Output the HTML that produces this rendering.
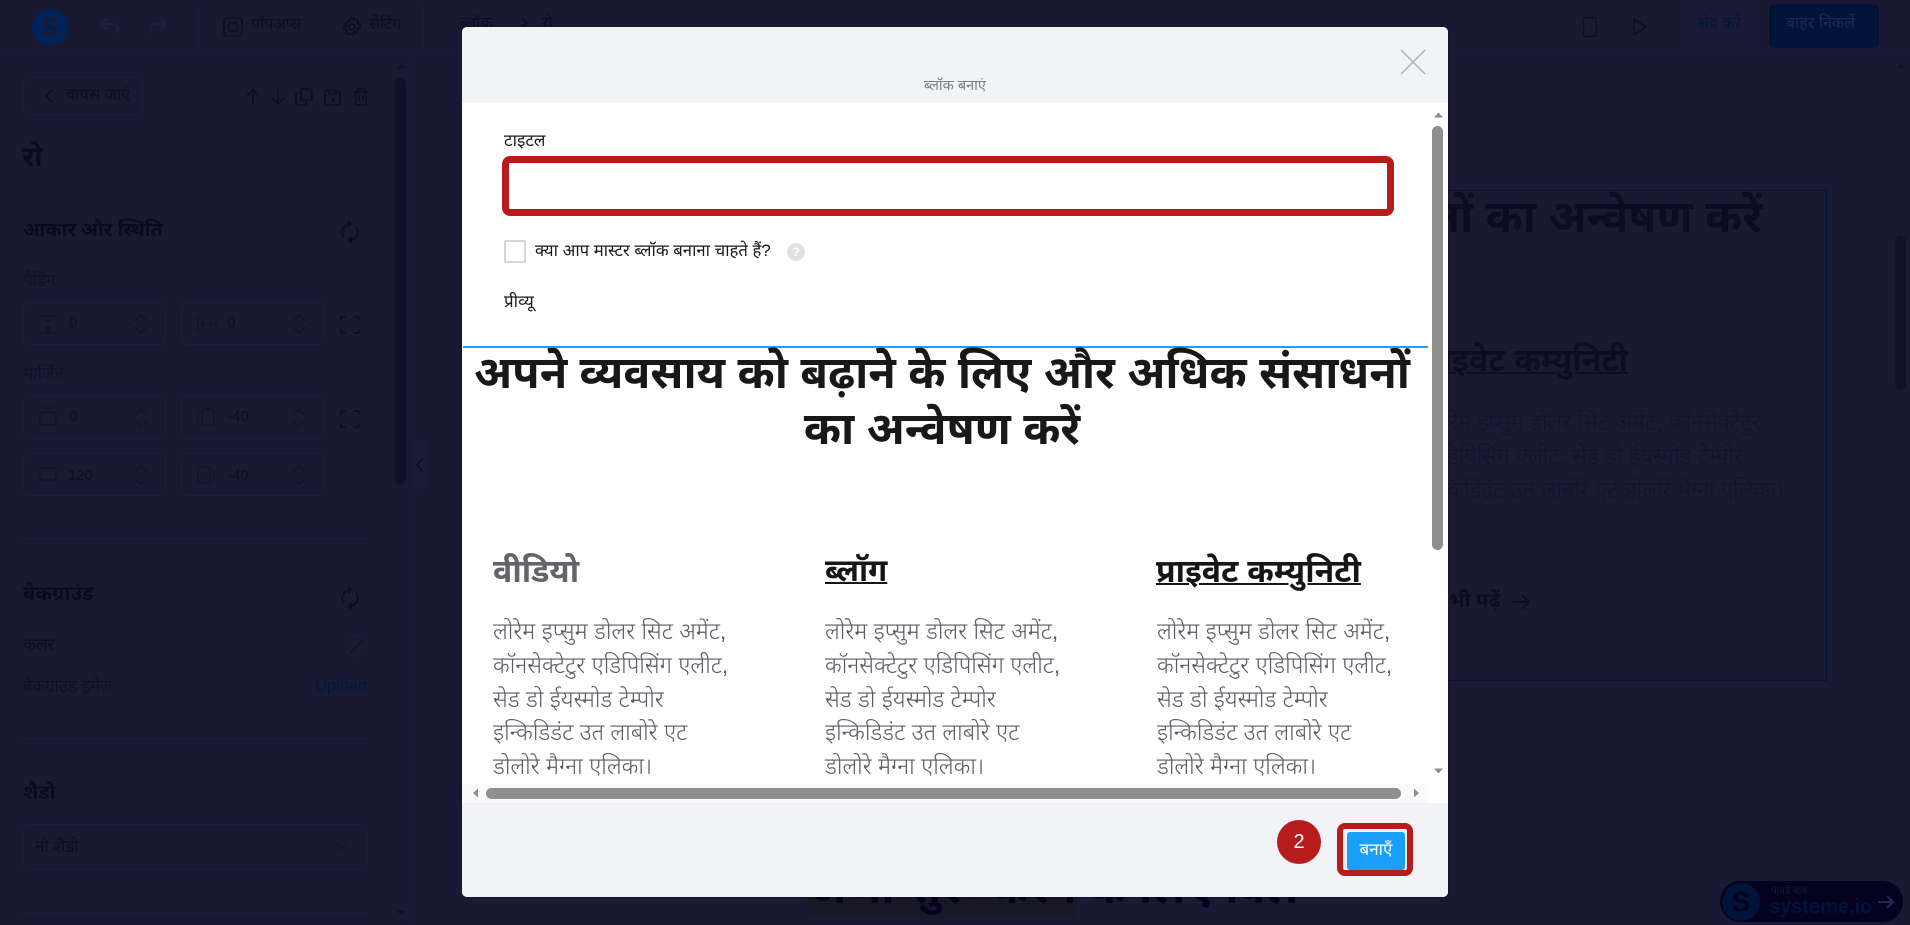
<!DOCTYPE html>
<html lang="hi"><head><meta charset="utf-8"><title>ब्लॉक बनाएं</title>
<style>
html,body{margin:0;padding:0;width:1910px;height:925px;overflow:hidden;background:#1a1934}
body{position:relative;font-family:"Liberation Sans","Noto Sans Devanagari","Lohit Devanagari","Noto Sans CJK JP",sans-serif;color:#0d0c24}
.a{position:absolute;white-space:nowrap}
.t{line-height:30px;height:30px}
svg{position:absolute;overflow:visible;fill:none}
.box{position:absolute;border:1px solid #1f1e3a;border-radius:6px;box-sizing:border-box}
.line{position:absolute;background:#1e1d39;height:1px}
.b{font-weight:700}
.p{font-size:23px;font-weight:300;line-height:33.8px;color:#5a5b63;left:0}
.h3{font-size:32px;font-weight:700;line-height:40px;color:#151618;text-decoration:underline;text-decoration-thickness:2px}
</style></head><body>
<!-- top bar -->
<div class="line" style="left:0;top:52px;width:1910px"></div>
<div class="a" style="left:32px;top:9px;width:36px;height:36px;border-radius:50%;background:#00245a"></div>
<div class="a b" style="left:32px;top:9px;width:36px;line-height:36px;text-align:center;font-size:26px;color:#1a1934">S</div>
<svg style="left:100px;top:17px" width="20" height="20" stroke="#201f3c" stroke-width="2"><path d="M7 2 2 7l5 5M2 7h10a6 6 0 0 1 6 6v4"/></svg>
<svg style="left:148px;top:17px" width="20" height="20" stroke="#201f3c" stroke-width="2"><path d="m13 2 5 5-5 5M18 7H8a6 6 0 0 0-6 6v4"/></svg>
<div class="line" style="left:198px;top:8px;width:1px;height:40px"></div>
<div class="line" style="left:423px;top:4px;width:1px;height:44px"></div>
<svg style="left:224px;top:18px" width="18" height="18" stroke="#0d0c24" stroke-width="1.600"><rect x="0" y="0" width="18" height="18" rx="3"/><rect x="5" y="5" width="8" height="8" rx="1"/></svg>
<div class="a t" style="left:251px;top:10px;font-size:16px">पॉपअप्स</div>
<svg style="left:343px;top:18px" width="18" height="18" stroke="#0d0c24" stroke-width="1.600"><circle cx="9" cy="9" r="3"/><path d="M7.500 0h3l.5 2.600 2.300-1.200 2.100 2.100-1.200 2.300 2.800.7v3l-2.800.7 1.200 2.300-2.100 2.100-2.300-1.200-.5 2.600h-3L7 15.400l-2.300 1.200-2.100-2.100 1.200-2.300L1 11.500v-3l2.800-.7-1.200-2.300 2.100-2.100L7 2.600z"/></svg>
<div class="a t" style="left:369px;top:10px;font-size:16px">सेटिंग</div>
<div class="a t" style="left:460px;top:9px;font-size:16px;color:#0d0c24">ब्लॉक</div>
<svg style="left:519px;top:17px" width="10" height="12" stroke="#0d0c24" stroke-width="1.500"><path d="m2 1 6 5-6 5"/></svg>
<div class="a t" style="left:542px;top:9px;font-size:16px;color:#0d0c24">रो</div>
<svg style="left:1583px;top:17px" width="14" height="20" stroke="#0d0c24" stroke-width="1.500"><rect x=".5" y=".5" width="13" height="19" rx="2"/><path d="M6.500 15.500h1"/></svg>
<svg style="left:1633px;top:18px" width="14" height="18" stroke="#0d0c24" stroke-width="1.500"><path d="M1 1v16l12-8z" stroke-linejoin="round"/></svg>
<div class="a" style="left:1680px;top:4px;width:80px;height:44px;background:#1b1a36;border-radius:6px"></div>
<div class="a t" style="left:1698px;top:9px;font-size:16px;color:#00163f">सेव करें</div>
<div class="a" style="left:1769px;top:4px;width:110px;height:44px;background:#001339;border-radius:6px"></div>
<div class="a t" style="left:1786px;top:9px;font-size:16px;color:#1c2a54">बाहर निकलें</div>

<!-- left panel -->
<div class="a" style="left:410px;top:53px;width:1px;height:872px;background:#1d1c38"></div>
<div class="a" style="left:410px;top:440px;width:20px;height:50px;background:#1c1b37;border-radius:0 10px 10px 0"></div>
<svg style="left:415px;top:457px" width="10" height="16" stroke="#0d0c24" stroke-width="1.500"><path d="M8 1 2 8l6 7"/></svg>
<div class="box" style="left:23px;top:77px;width:120px;height:38px"></div>
<svg style="left:44px;top:89px" width="9" height="14" stroke="#0d0c24" stroke-width="1.800"><path d="M8 1 2 7l6 6"/></svg>
<div class="a t" style="left:66px;top:80px;font-size:16.500px">वापस जाएं</div>
<svg style="left:246px;top:88px" width="125" height="18" stroke="#0d0c24" stroke-width="1.600"><path d="M7 17V2M1 8l6-6 6 6M32 1v15M26 10l6 6 6-6"/><path d="M53 5h-2a1 1 0 0 0-1 1v10a1 1 0 0 0 1 1h8a1 1 0 0 0 1-1v-3M56 1h8l2 2v8a1 1 0 0 1-1 1h-9a1 1 0 0 1-1-1V2a1 1 0 0 1 1-1z"/><path d="M80 2h10l4 3v11a1 1 0 0 1-1 1H80a1 1 0 0 1-1-1V3a1 1 0 0 1 1-1zM83 2v4h7V2"/><circle cx="87" cy="12" r="1"/><path d="M108 4h14M111 4V1h8v3M110 4v13h10V4M113 7v7M117 7v7"/></svg>
<div class="a b" style="left:22px;top:139px;font-size:28px;line-height:36px;color:#0a0920">रो</div>
<div class="a b t" style="left:23px;top:215px;font-size:19.500px;color:#0a0920">आकार और स्थिति</div>
<svg style="left:341px;top:221px" width="18" height="22" stroke="#0d0c24" stroke-width="2"><path d="M3 16A8 8 0 0 1 9 3M15 6a8 8 0 0 1-6 13"/><path d="M7 0l3 3-3 3M11 16l-3 3 3 3"/></svg>
<div class="a t" style="left:23px;top:266px;font-size:17px;color:#10102a">पैडिंग</div>

<div class="box" style="left:23px;top:302px;width:143px;height:43px"></div>
<div class="box" style="left:181px;top:302px;width:143px;height:43px"></div>
<div class="a t" style="left:69px;top:308px;font-size:15px;color:#0d0c24">0</div>
<div class="a t" style="left:227px;top:308px;font-size:15px;color:#0d0c24">0</div>
<svg style="left:39px;top:315px" width="18" height="19" stroke="#11102a" stroke-width="1.200"><path d="M1 1h16M1 18h16M9 4v11M6 7l3-3 3 3M6 12l3 3 3-3"/></svg>
<svg style="left:197px;top:315px" width="20" height="18" stroke="#11102a" stroke-width="1.200"><path d="M1 1v16M19 1v16M5 9h10M7 6 4 9l3 3M13 6l3 3-3 3"/></svg>
<svg style="left:134px;top:314px" width="14" height="20" stroke="#11102a" stroke-width="1.200"><path d="m1 7 6-6 6 6M1 13l6 6 6-6"/></svg>
<svg style="left:292px;top:314px" width="14" height="20" stroke="#11102a" stroke-width="1.200"><path d="m1 7 6-6 6 6M1 13l6 6 6-6"/></svg>
<svg style="left:341px;top:316px" width="18" height="18" stroke="#0d0c24" stroke-width="1.600"><path d="M0 5V1h5M13 1h5v4M18 13v4h-5M5 17H0v-4"/></svg>

<div class="a t" style="left:23px;top:359px;font-size:17px;color:#10102a">मार्जिन</div>
<div class="box" style="left:23px;top:396px;width:143px;height:43px"></div>
<div class="box" style="left:181px;top:396px;width:143px;height:43px"></div>
<div class="a t" style="left:69px;top:402px;font-size:15px">0</div>
<div class="a t" style="left:227px;top:402px;font-size:15px">-40</div>
<svg style="left:39px;top:407px" width="18" height="19" stroke="#11102a" stroke-width="1.200"><path d="M3 1h12"/><rect x="1" y="5" width="16" height="13" rx="2"/></svg>
<svg style="left:197px;top:408px" width="18" height="18" stroke="#11102a" stroke-width="1.200"><path d="M1 3v12"/><rect x="5" y="1" width="12" height="16" rx="2"/></svg>
<svg style="left:134px;top:408px" width="14" height="20" stroke="#11102a" stroke-width="1.200"><path d="m1 7 6-6 6 6M1 13l6 6 6-6"/></svg>
<svg style="left:292px;top:408px" width="14" height="20" stroke="#11102a" stroke-width="1.200"><path d="m1 7 6-6 6 6M1 13l6 6 6-6"/></svg>
<svg style="left:341px;top:410px" width="18" height="18" stroke="#0d0c24" stroke-width="1.600"><path d="M0 5V1h5M13 1h5v4M18 13v4h-5M5 17H0v-4"/></svg>
<div class="box" style="left:23px;top:453px;width:143px;height:43px"></div>
<div class="box" style="left:181px;top:453px;width:143px;height:43px"></div>
<div class="a t" style="left:68px;top:461px;font-size:15px">120</div>
<div class="a t" style="left:227px;top:461px;font-size:15px">-40</div>
<svg style="left:39px;top:467px" width="18" height="16" stroke="#11102a" stroke-width="1.200"><rect x="1" y="1" width="16" height="12" rx="2"/></svg>
<svg style="left:197px;top:466px" width="18" height="18" stroke="#11102a" stroke-width="1.200"><path d="M17 3v12"/><rect x="1" y="1" width="12" height="16" rx="2"/></svg>
<svg style="left:134px;top:465px" width="14" height="20" stroke="#11102a" stroke-width="1.200"><path d="m1 7 6-6 6 6M1 13l6 6 6-6"/></svg>
<svg style="left:292px;top:465px" width="14" height="20" stroke="#11102a" stroke-width="1.200"><path d="m1 7 6-6 6 6M1 13l6 6 6-6"/></svg>

<div class="line" style="left:23px;top:538px;width:345px"></div>
<div class="a b t" style="left:23px;top:579px;font-size:20px;color:#0a0920">बैकग्राउंड</div>
<svg style="left:341px;top:587px" width="18" height="22" stroke="#0d0c24" stroke-width="2"><path d="M3 16A8 8 0 0 1 9 3M15 6a8 8 0 0 1-6 13"/><path d="M7 0l3 3-3 3M11 16l-3 3 3 3"/></svg>
<div class="a t" style="left:23px;top:630px;font-size:17px;color:#0d0c24">कलर</div>
<svg style="left:346px;top:635px" width="22" height="22" stroke="#11102a" stroke-width="1"><circle cx="11" cy="11" r="10.500" stroke="#1f1e3a"/><path d="M4 18 18 4" stroke-width="1.500"/></svg>
<div class="a t" style="left:23px;top:671px;font-size:17.500px;font-weight:300;color:#0d0c24">बैकग्राउंड इमेज</div>
<div class="a t" style="left:315px;top:671px;font-size:16.500px;color:#00163f">Upload</div>
<div class="line" style="left:23px;top:738px;width:345px"></div>
<div class="a b t" style="left:23px;top:778px;font-size:20px;color:#0a0920">शैडो</div>
<div class="box" style="left:23px;top:824px;width:345px;height:46px"></div>
<div class="a t" style="left:35px;top:832px;font-size:17px;color:#0d0c24">नो शैडो</div>
<svg style="left:335px;top:843px" width="12" height="8" stroke="#11102a" stroke-width="1.300"><path d="m1 1 5 5 5-5"/></svg>
<div class="line" style="left:23px;top:912px;width:345px"></div>
<!-- left scrollbar -->
<svg style="left:395px;top:62px" width="12" height="8"><path d="m1.500 6.500 4.500-5 4.500 5z" fill="#11102a"/></svg>
<div class="a" style="left:395px;top:78px;width:11px;height:406px;background:#11102a;border-radius:6px"></div>
<svg style="left:395px;top:909px" width="12" height="8"><path d="m1.500 1.500 4.500 5 4.500-5z" fill="#11102a"/></svg>

<!-- canvas behind -->
<div class="a" style="left:1440px;top:190px;width:387px;height:491px;box-sizing:border-box;border:1.500px solid #00133b;border-left:0"></div>
<div class="a b" style="left:1100px;top:190px;font-size:44.800px;line-height:55px;color:#0c0b22;width:662px;text-align:right">संसाधनों का अन्वेषण करें</div>
<div class="a h3" style="left:1300px;top:340px;width:328px;text-align:right;color:#0c0b22;">प्राइवेट कम्युनिटी</div>
<div class="a" style="left:1300px;top:405px;width:484px;text-align:right;font-size:23px;font-weight:300;line-height:34px;color:#13122c"><span style="padding-right:23px">लोरेम इप्सुम डोलर सिट अमेंट, कॉनसेक्टेटुर</span><br><span style="padding-right:41px">एडिपिसिंग एलीट, सेड डो ईयस्मोड टेम्पोर</span><br>इन्किडिडंट उत लाबोरे एट डोलोरे मैग्ना एलिका।</div>
<div class="a b t" style="left:1449px;top:586px;font-size:20px;color:#0c0b22">भी पढ़ें</div>
<svg style="left:1512px;top:594px" width="18" height="16" stroke="#0c0b22" stroke-width="2"><path d="M0 8h17M10 1l7 7-7 7"/></svg>
<svg style="left:1895px;top:62px" width="12" height="8"><path d="m1.500 6.500 4.500-5 4.500 5z" fill="#11102a"/></svg>
<div class="a" style="left:1895px;top:236px;width:11px;height:154px;background:#11102a;border-radius:6px"></div>
<div class="a" style="left:1720px;top:881px;width:183px;height:41px;background:#04021f;border-radius:21px"></div>
<div class="a" style="left:1722px;top:883px;width:38px;height:38px;border-radius:50%;background:#001339"></div>
<div class="a b" style="left:1722px;top:883px;width:38px;line-height:38px;text-align:center;font-size:28px;color:#04021f">S</div>
<div class="a" style="left:1771px;top:885px;font-size:10px;line-height:13px;color:#1a1934">पावर्ड बाय</div>
<div class="a b" style="left:1769px;top:894px;font-size:20px;line-height:26px;color:#001339">systeme.io</div>
<svg style="left:1878px;top:895px" width="16" height="14" stroke="#1c2a54" stroke-width="2"><path d="M0 7h15M9 1l6 6-6 6"/></svg>
<div class="a" style="left:807px;top:890px;width:270px;height:28px;background:#191826"></div>
<div class="a b" style="left:808px;top:860px;width:490px;overflow:hidden;font-size:45px;line-height:55px;color:#04021f">अभी शुरू करने के लिए क्लिक करें</div>

<!-- modal -->
<div class="a" style="left:462px;top:27px;width:986px;height:870px;background:#fff;border-radius:5px;overflow:hidden;box-shadow:0 0 2px rgba(0,0,0,.4)">
 <div class="a" style="left:0;top:0;width:986px;height:76px;background:#f2f3f7"></div>
 <div class="a" style="left:0;top:776px;width:986px;height:94px;background:#f2f3f7"></div>
 <div class="a" style="left:0;top:50px;width:986px;text-align:center;font-size:14.500px;line-height:18px;color:#7c7d85">ब्लॉक बनाएं</div>
 <svg style="left:938px;top:22px" width="26" height="26" stroke="#b0b1b6" stroke-width="1.500"><path d="M1 1l24 24M25 1 1 25"/></svg>
 <div class="a t" style="left:42px;top:99px;font-size:17px;color:#1a1a1a">टाइटल</div>
 <div class="a" style="left:39.500px;top:129px;width:892px;height:60px;box-sizing:border-box;border:7px solid #b71c1c;border-radius:8px;background:#fff"></div>
 <div class="a" style="left:42px;top:213px;width:22px;height:23px;box-sizing:border-box;border:2px solid #d6d6d8;border-radius:2px;background:#fff"></div>
 <div class="a t" style="left:73px;top:209px;font-size:16.700px;color:#1a1a1a">क्या आप मास्टर ब्लॉक बनाना चाहते हैं?</div>
 <div class="a b" style="left:325px;top:216px;width:18px;height:18px;border-radius:50%;background:#e1e1e3;color:#fff;font-size:12px;line-height:18px;text-align:center">?</div>
 <div class="a t" style="left:42px;top:260px;font-size:17px;color:#1a1a1a">प्रीव्यू</div>
 <div class="a b" style="left:0;top:318px;width:956px;text-align:center;font-size:44.800px;line-height:56px;color:#17181a;padding-left:2px">अपने व्यवसाय को बढ़ाने के लिए और अधिक संसाधनों<br>का अन्वेषण करें</div>
 <div class="a" style="left:1px;top:319px;width:965px;height:2px;background:#1ba0f2;mix-blend-mode:multiply"></div>
 <div class="a" style="left:31px;top:494px;width:900px;height:262px;overflow:hidden">
  <div class="a h3" style="left:0;top:30px;color:#62636b;text-decoration:none">वीडियो</div>
  <div class="a p" style="left:0;top:94px">लोरेम इप्सुम डोलर सिट अमेंट,<br>कॉनसेक्टेटुर एडिपिसिंग एलीट,<br>सेड डो ईयस्मोड टेम्पोर<br>इन्किडिडंट उत लाबोरे एट<br>डोलोरे मैग्ना एलिका।</div>
  <div class="a h3" style="left:332px;top:30px;font-size:31px">ब्लॉग</div>
  <div class="a p" style="left:332px;top:94px">लोरेम इप्सुम डोलर सिट अमेंट,<br>कॉनसेक्टेटुर एडिपिसिंग एलीट,<br>सेड डो ईयस्मोड टेम्पोर<br>इन्किडिडंट उत लाबोरे एट<br>डोलोरे मैग्ना एलिका।</div>
  <div class="a h3" style="left:663px;top:30px">प्राइवेट कम्युनिटी</div>
  <div class="a p" style="left:664px;top:94px">लोरेम इप्सुम डोलर सिट अमेंट,<br>कॉनसेक्टेटुर एडिपिसिंग एलीट,<br>सेड डो ईयस्मोड टेम्पोर<br>इन्किडिडंट उत लाबोरे एट<br>डोलोरे मैग्ना एलिका।</div>
 </div>
 <!-- scrollbars -->
 <div class="a" style="left:0;top:757px;width:966px;height:19px;background:#fafafa"></div>
 <div class="a" style="left:966px;top:76px;width:20px;height:700px;background:#fff"></div>
 <svg style="left:966px;top:84px" width="20" height="8"><path d="m6 6.500 4.500-5 4.500 5z" fill="#8f8f8f"/></svg>
 <div class="a" style="left:970px;top:99px;width:11px;height:424px;background:#8f8f8f;border-radius:6px"></div>
 <svg style="left:966px;top:740px" width="20" height="8"><path d="m6 1.500 4.500 5 4.500-5z" fill="#8f8f8f"/></svg>
 <svg style="left:8px;top:757px" width="10" height="18"><path d="M8 4.500 3 9l5 4.500z" fill="#8f8f8f"/></svg>
 <div class="a" style="left:24px;top:761px;width:915px;height:11px;background:#8f8f8f;border-radius:6px"></div>
 <svg style="left:950px;top:757px" width="10" height="18"><path d="M2 4.500 7 9l-5 4.500z" fill="#8f8f8f"/></svg>
 <!-- footer -->
 <div class="a" style="left:815px;top:793px;width:44px;height:44px;border-radius:50%;background:#b71c1c;color:#fff;font-size:20px;line-height:44px;text-align:center;font-family:'Liberation Sans',sans-serif">2</div>
 <div class="a" style="left:875px;top:796px;width:76px;height:53px;box-sizing:border-box;border:6.500px solid #b71c1c;border-radius:8px;background:#f2f3f7"></div>
 <div class="a" style="left:885px;top:805px;width:58px;height:38px;background:#1a9ffa;border-radius:3px;color:#fff;font-size:17px;line-height:36px;text-align:center">बनाएँ</div>
</div>
</body></html>
